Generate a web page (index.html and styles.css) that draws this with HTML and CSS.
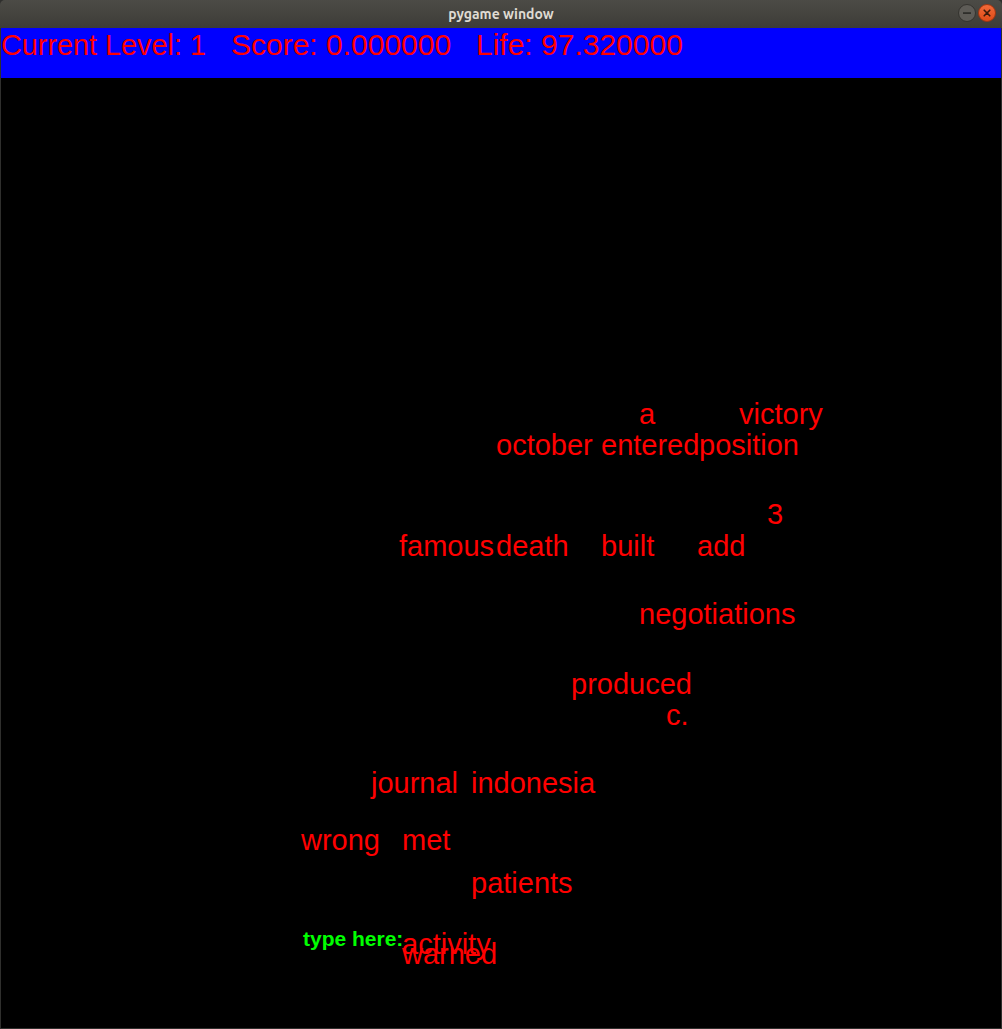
FILE: index.html
```html
<!DOCTYPE html>
<html>
<head>
<meta charset="utf-8">
<title>pygame window</title>
<link rel="stylesheet" href="styles.css">
</head>
<body>
<div class="window">
  <div class="titlebar">
    <span class="title">pygame window</span>
    <div class="controls">
      <svg class="btn" width="18" height="18" viewBox="0 0 18 18">
        <circle cx="9" cy="9" r="8.5" fill="#5e5c57" stroke="#34332f"/>
        <rect x="5" y="8.2" width="8" height="1.8" fill="#2f2e2b"/>
      </svg>
      <svg class="btn" width="18" height="18" viewBox="0 0 18 18">
        <defs>
          <linearGradient id="cg" x1="0" y1="0" x2="0" y2="1">
            <stop offset="0" stop-color="#f26b3a"/>
            <stop offset="1" stop-color="#df4a16"/>
          </linearGradient>
        </defs>
        <circle cx="9" cy="9" r="8.5" fill="url(#cg)" stroke="#9c3412"/>
        <path d="M6.2 6.2 L11.8 11.8 M11.8 6.2 L6.2 11.8" stroke="#3a1a0c" stroke-width="1.6" stroke-linecap="round"/>
      </svg>
    </div>
  </div>
  <div class="content">
    <div class="hud">
      <span class="seg seg-level"><span class="squeeze">Current Level: 1</span></span>
      <span class="seg seg-score">Score: 0.000000</span>
      <span class="seg seg-life">Life: 97.320000</span>
    </div>
    <div class="field">
      <span class="word" style="left:638px;top:322px">a</span>
      <span class="word" style="left:738px;top:322px">victory</span>
      <span class="word" style="left:495px;top:353px">october</span>
      <span class="word" style="left:600px;top:353px">entered</span>
      <span class="word" style="left:698px;top:353px">position</span>
      <span class="word" style="left:766px;top:422px">3</span>
      <span class="word" style="left:398px;top:454px">famous</span>
      <span class="word" style="left:495px;top:454px">death</span>
      <span class="word" style="left:600px;top:454px">built</span>
      <span class="word" style="left:696px;top:454px">add</span>
      <span class="word" style="left:638px;top:522px">negotiations</span>
      <span class="word" style="left:570px;top:592px">produced</span>
      <span class="word" style="left:665px;top:623px">c.</span>
      <span class="word" style="left:370px;top:691px">journal</span>
      <span class="word" style="left:470px;top:691px">indonesia</span>
      <span class="word" style="left:300px;top:748px">wrong</span>
      <span class="word" style="left:401px;top:748px">met</span>
      <span class="word" style="left:470px;top:791px">patients</span>
      <span class="prompt" style="left:302px;top:850px">type here:</span>
      <span class="word" style="left:401px;top:852px">activity</span>
      <span class="word" style="left:401px;top:862px">warned</span>
    </div>
  </div>
</div>
</body>
</html>
```

FILE: styles.css
```css
html, body {
  margin: 0;
  padding: 0;
  background: #2c2c2c;
}

.window {
  width: 1002px;
  height: 1029px;
  display: flex;
  flex-direction: column;
  background: #2f2f2d;
}

.titlebar {
  height: 28px;
  flex: 0 0 28px;
  background: linear-gradient(#4c4b46, #3d3c38);
  border-radius: 5px 5px 0 0;
  display: flex;
  align-items: center;
  justify-content: center;
  position: relative;
}

.title {
  font-family: "Ubuntu", "DejaVu Sans", sans-serif;
  font-weight: bold;
  font-size: 14px;
  color: #dfdbd2;
}

.controls {
  position: absolute;
  right: 6px;
  top: 4px;
  display: flex;
  gap: 2px;
}

.btn {
  display: block;
}

.content {
  margin: 0 1px;
  width: 1000px;
  height: 1000px;
  background: #000;
  display: flex;
  flex-direction: column;
}

.hud {
  height: 50px;
  flex: 0 0 50px;
  box-sizing: border-box;
  padding-top: 2px;
  background: #0000ff;
  color: #ff0000;
  font-family: "Liberation Sans", Arial, sans-serif;
  font-size: 30px;
  line-height: 30px;
  white-space: nowrap;
  display: flex;
}

.seg {
  display: inline-block;
}

.seg-level {
  width: 230px;
}

.squeeze {
  display: inline-block;
  transform: scaleX(0.96);
  transform-origin: 0 0;
}

.seg-score {
  width: 245px;
}

.field {
  position: relative;
  flex: 1;
  overflow: hidden;
}

.word {
  position: absolute;
  font-family: "Liberation Sans", Arial, sans-serif;
  font-size: 29px;
  line-height: 29px;
  color: #ff0000;
  white-space: nowrap;
}

.prompt {
  position: absolute;
  font-family: "Liberation Sans", Arial, sans-serif;
  font-weight: bold;
  font-size: 21px;
  line-height: 21px;
  color: #00ff00;
  white-space: nowrap;
}
```
